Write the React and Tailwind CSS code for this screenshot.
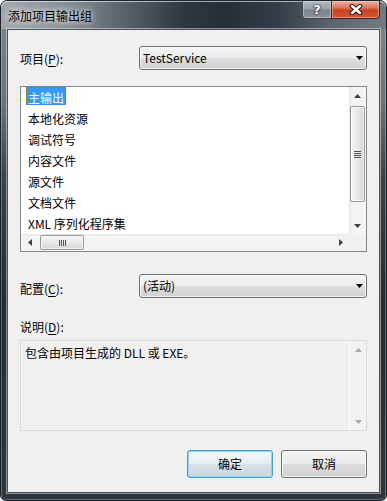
import React from "react";

const FONT = "font-['Noto_Sans_CJK_SC','Microsoft_YaHei',sans-serif]";

function Combo({ text }) {
  return (
    <div className="w-[228px] h-[24px] rounded-[3px] border border-[#707070] bg-[linear-gradient(#f3f3f3_0%,#ececec_50%,#dedede_50%,#d2d2d2_100%)] shadow-[inset_0_0_0_1px_rgba(255,255,255,0.65)] flex items-center pl-[3px] pr-[3px]">
      <span className="flex-1 text-[12px] leading-[16px] text-black">{text}</span>
      <svg width="7" height="4" viewBox="0 0 7 4" className="shrink-0">
        <path d="M0 0H7L3.5 4Z" fill="#000" />
      </svg>
    </div>
  );
}

function ArrowV({ dir, color = "#404040" }) {
  return (
    <svg width="7" height="4" viewBox="0 0 7 4">
      {dir === "up" ? (
        <path d="M0 4H7L3.5 0Z" fill={color} />
      ) : (
        <path d="M0 0H7L3.5 4Z" fill={color} />
      )}
    </svg>
  );
}

function ArrowH({ dir, color = "#404040" }) {
  return (
    <svg width="4" height="7" viewBox="0 0 4 7">
      {dir === "left" ? (
        <path d="M4 0V7L0 3.5Z" fill={color} />
      ) : (
        <path d="M0 0V7L4 3.5Z" fill={color} />
      )}
    </svg>
  );
}

function Button({ children, primary }) {
  return (
    <div
      className={
        primary
          ? "w-[86px] h-[28px] rounded-[3px] border border-[#3c9fd8] shadow-[inset_0_0_0_1px_#8fd3f5] bg-[linear-gradient(#f0f5f8_0%,#e6eef2_50%,#d8e1e6_50%,#ccd7dd_100%)] flex items-center justify-center text-[12px] leading-[16px] text-black"
          : "w-[86px] h-[28px] rounded-[3px] border border-[#707070] shadow-[inset_0_0_0_1px_rgba(255,255,255,0.7)] bg-[linear-gradient(#f3f3f3_0%,#ececec_50%,#dddddd_50%,#d0d0d0_100%)] flex items-center justify-center text-[12px] leading-[16px] text-black"
      }
    >
      {children}
    </div>
  );
}

const items = ["主输出", "本地化资源", "调试符号", "内容文件", "源文件", "文档文件", "XML 序列化程序集"];

export default function App() {
  return (
    <div
      className={`${FONT} w-[387px] h-[501px] flex flex-col rounded-t-[7px] rounded-b-[6px] border border-[#1b232c] bg-[linear-gradient(#7f878e_0%,#6c747b_20%,#3b434b_35%,#262c33_60%,#30363d_100%)] shadow-[inset_0_1px_0_rgba(255,255,255,0.55),inset_0_0_0_1px_rgba(255,255,255,0.25)] overflow-hidden`}
    >
      {/* Title bar */}
      <div className="h-[28px] shrink-0 flex items-start bg-[linear-gradient(90deg,#a2a9ae_0%,#848c93_18%,#59626b_32%,#2d353f_48%,#262e38_58%,#353e48_72%,#5c656d_86%,#737b82_100%)] shadow-[inset_0_1px_0_rgba(255,255,255,0.6)] rounded-t-[6px]">
        <div className="pl-[7px] pt-[7px] text-[12px] leading-[16px] text-black [text-shadow:0_0_6px_rgba(255,255,255,0.9),0_0_10px_rgba(255,255,255,0.7)]">
          添加项目输出组
        </div>
        <div className="ml-auto mr-[6px] -mt-px flex">
          <div className="w-[29px] h-[19px] rounded-bl-[4px] border border-[#3e4750] border-r-0 bg-[linear-gradient(#b4bac0_0%,#979fa6_45%,#7a838b_55%,#8a939a_100%)] shadow-[inset_0_0_0_1px_rgba(255,255,255,0.35)] flex items-center justify-center">
            <span className="font-['DejaVu_Sans',sans-serif] text-[13px] font-bold leading-none text-white [text-shadow:0_0_1px_#222,0_0_1px_#222,0_0_2px_#222]">
              ?
            </span>
          </div>
          <div className="w-[49px] h-[19px] rounded-br-[4px] border border-[#4a1d12] bg-[linear-gradient(#eab3a4_0%,#d9735a_40%,#c9421f_55%,#d1583a_100%)] shadow-[inset_0_0_0_1px_rgba(255,220,200,0.45)] flex items-center justify-center">
            <svg width="14" height="11" viewBox="0 0 14 11">
              <path d="M3 2L11 9M11 2L3 9" stroke="#3b1c14" strokeWidth="4.6" strokeLinecap="round" />
              <path d="M3 2L11 9M11 2L3 9" stroke="#ffffff" strokeWidth="2.4" strokeLinecap="round" />
            </svg>
          </div>
        </div>
      </div>

      {/* Client area */}
      <div className="flex-1 mx-[6px] mb-[7px] border border-[#48525b] shadow-[0_0_0_1px_rgba(255,255,255,0.45)] bg-[#f0f0f0] px-[12px] pt-[16px] flex flex-col text-[12px] leading-[16px] text-black">
        {/* Project row */}
        <div className="flex h-[24px]">
          <div className="w-[119px] pt-[5px]">
            项目(<span className="underline underline-offset-2">P</span>):
          </div>
          <Combo text="TestService" />
        </div>

        {/* Listbox */}
        <div className="mt-[16px] h-[166px] border border-[#828790] bg-white flex flex-col">
          <div className="flex h-[147px]">
            <div className="flex-1 flex flex-col pl-[5px]">
              {items.map((t, i) => (
                <div key={t} className="h-[21px] flex items-start">
                  {i === 0 ? (
                    <span className="h-[18px] px-[1px] leading-[19px] bg-[#3399ff] text-white border border-dotted border-[#cc6600]">
                      {t}
                    </span>
                  ) : (
                    <span className="h-[18px] px-[2px] leading-[21px]">{t}</span>
                  )}
                </div>
              ))}
            </div>
            {/* vertical scrollbar */}
            <div className="w-[17px] flex flex-col bg-[linear-gradient(90deg,#e3e3e3_0%,#f2f2f2_15%,#f5f5f5_100%)]">
              <div className="h-[17px] flex items-center justify-center">
                <ArrowV dir="up" />
              </div>
              <div className="mt-[2px] ml-[1px] w-[15px] h-[96px] rounded-[2px] border border-[#979797] bg-[linear-gradient(90deg,#f4f4f4_0%,#e8e8e8_50%,#d6d6d6_100%)] shadow-[inset_0_0_0_1px_rgba(255,255,255,0.7)] flex flex-col items-center justify-center gap-[1px]">
                <div className="w-[7px] h-px bg-[#555]" />
                <div className="w-[7px] h-px bg-[#555]" />
                <div className="w-[7px] h-px bg-[#555]" />
                <div className="w-[7px] h-px bg-[#555]" />
              </div>
              <div className="flex-1" />
              <div className="h-[17px] flex items-center justify-center">
                <ArrowV dir="down" />
              </div>
            </div>
          </div>
          <div className="flex h-[17px]">
            <div className="flex-1 flex items-center bg-[linear-gradient(#e3e3e3_0%,#f2f2f2_15%,#f5f5f5_100%)]">
              <div className="w-[17px] h-[17px] flex items-center justify-center">
                <ArrowH dir="left" />
              </div>
              <div className="ml-[2px] w-[44px] h-[15px] rounded-[2px] border border-[#979797] bg-[linear-gradient(#f4f4f4_0%,#e8e8e8_50%,#d6d6d6_100%)] shadow-[inset_0_0_0_1px_rgba(255,255,255,0.7)] flex items-center justify-center gap-[1px]">
                <div className="w-px h-[6px] bg-[#555]" />
                <div className="w-px h-[6px] bg-[#555]" />
                <div className="w-px h-[6px] bg-[#555]" />
                <div className="w-px h-[6px] bg-[#555]" />
              </div>
              <div className="flex-1" />
              <div className="w-[17px] h-[17px] flex items-center justify-center">
                <ArrowH dir="right" />
              </div>
            </div>
            <div className="w-[17px] bg-[#f0f0f0]" />
          </div>
        </div>

        {/* Config row */}
        <div className="mt-[22px] flex h-[24px]">
          <div className="w-[119px] pt-[7px]">
            配置(<span className="underline underline-offset-2">C</span>):
          </div>
          <Combo text="(活动)" />
        </div>

        {/* Description */}
        <div className="mt-[21px] h-[16px]">
          说明(<span className="underline underline-offset-2">D</span>):
        </div>
        <div className="mt-[5px] h-[91px] border border-[#d9d9d9] shadow-[inset_0_0_0_1px_#f7f7f7] bg-[#f0f0f0] flex">
          <div className="flex-1 pl-[4px] pt-[4px]">包含由项目生成的 DLL 或 EXE。</div>
          <div className="w-[17px] border-l border-[#fbfbfb] bg-[#f2f2f2] flex flex-col">
            <div className="h-[17px] flex items-center justify-center">
              <ArrowV dir="up" color="#a8a8a8" />
            </div>
            <div className="flex-1" />
            <div className="h-[17px] flex items-center justify-center">
              <ArrowV dir="down" color="#a8a8a8" />
            </div>
          </div>
        </div>

        {/* Buttons */}
        <div className="mt-[19px] flex justify-end gap-[8px]">
          <Button primary>确定</Button>
          <Button>取消</Button>
        </div>
      </div>
    </div>
  );
}
